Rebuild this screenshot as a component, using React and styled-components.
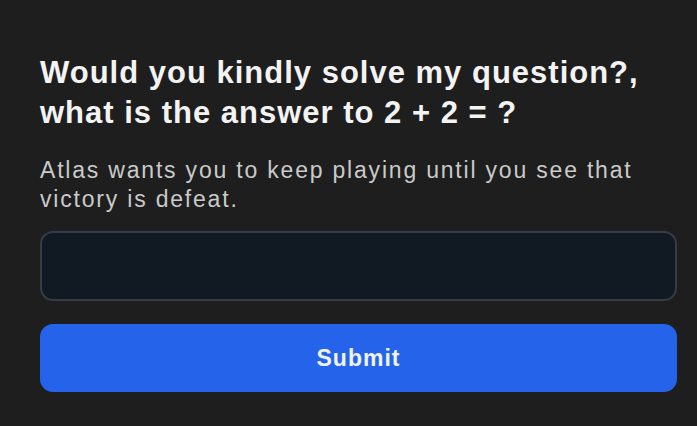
import React from 'react';
import styled, { createGlobalStyle } from 'styled-components';

const GlobalStyle = createGlobalStyle`
  html, body {
    margin: 0;
    padding: 0;
    background: #1e1e1e;
    font-family: "Liberation Sans", Arial, sans-serif;
  }
`;

const Page = styled.div`
  width: 697px;
  height: 426px;
  box-sizing: border-box;
  padding: 53px 20px 0 40px;
  background: #1e1e1e;
`;

const Title = styled.h2`
  margin: 0 0 23px;
  font-size: 31px;
  line-height: 40px;
  letter-spacing: 1px;
  font-weight: 700;
  color: #f3f3f3;
`;

const Hint = styled.p`
  margin: 0 0 17px;
  font-size: 23px;
  line-height: 29px;
  letter-spacing: 1.8px;
  color: #cacaca;
`;

const AnswerField = styled.input`
  display: block;
  width: 100%;
  height: 70px;
  box-sizing: border-box;
  margin: 0 0 23px;
  padding: 0 16px;
  background: #111923;
  border: 2px solid #353c47;
  border-radius: 13px;
  color: #f2f2f2;
  font: inherit;
  font-size: 22px;
  outline: none;
`;

const SubmitButton = styled.button`
  display: block;
  width: 100%;
  height: 68px;
  border: none;
  border-radius: 13px;
  background: #2563eb;
  color: #eef3ff;
  font-family: inherit;
  font-size: 23px;
  letter-spacing: 1px;
  font-weight: 700;
  cursor: pointer;
`;

export default function App() {
  return (
    <>
      <GlobalStyle />
      <Page>
        <Title>
          Would you kindly solve my question?,
          <br />
          what is the answer to 2 + 2 = ?
        </Title>
        <Hint>Atlas wants you to keep playing until you see that victory is defeat.</Hint>
        <AnswerField type="text" />
        <SubmitButton>Submit</SubmitButton>
      </Page>
    </>
  );
}
